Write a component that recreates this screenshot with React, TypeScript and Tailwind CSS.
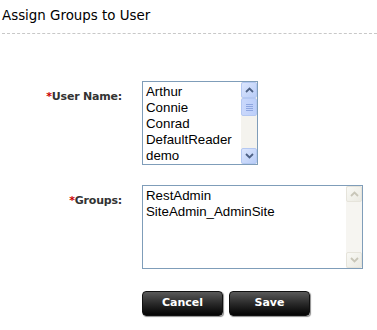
import React from "react";

const users = ["Arthur", "Connie", "Conrad", "DefaultReader", "demo"];
const groups = ["RestAdmin", "SiteAdmin_AdminSite"];

function Arrow({ up, color }: { up: boolean; color: string }) {
    return (
        <svg width="9" height="6" viewBox="0 0 9 6">
            <path
                d={up ? "M1 5 L4.5 1.5 L8 5" : "M1 1 L4.5 4.5 L8 1"}
                fill="none"
                stroke={color}
                strokeWidth="1.8"
            />
        </svg>
    );
}

function ScrollBar({ active }: { active: boolean }) {
    const btn = active
        ? "bg-gradient-to-br from-[#dce6fd] to-[#b9cdf7] border-[#b4c8f2]"
        : "bg-gradient-to-br from-[#f9f9f5] to-[#ebeae2] border-[#e6e4db]";
    const arrow = active ? "#4d6185" : "#c8c6b8";
    return (
        <div className={`flex w-[16px] flex-col ${active ? "bg-[#f4f3ee]" : "bg-[#f6f5f1]"}`}>
            <div className={`flex h-[16px] items-center justify-center rounded-[2px] border ${btn}`}>
                <Arrow up color={arrow} />
            </div>
            {active && (
                <div className="flex h-[18px] flex-col items-center justify-center gap-[1px] rounded-[2px] border border-[#b4c8f2] bg-gradient-to-r from-[#cad8fb] to-[#bccffa]">
                    <div className="h-[1px] w-[7px] bg-[#8ea6e0]" />
                    <div className="h-[1px] w-[7px] bg-[#8ea6e0]" />
                    <div className="h-[1px] w-[7px] bg-[#8ea6e0]" />
                    <div className="h-[1px] w-[7px] bg-[#8ea6e0]" />
                </div>
            )}
            <div className="flex-1" />
            <div className={`flex h-[16px] items-center justify-center rounded-[2px] border ${btn}`}>
                <Arrow up={false} color={arrow} />
            </div>
        </div>
    );
}

function ListBox({ items, width, active }: { items: string[]; width: string; active: boolean }) {
    return (
        <div className={`flex h-[84px] ${width} border border-[#7f9db9] bg-white`}>
            <div className="flex-1 overflow-hidden pl-[3px] pt-[2px] font-['Liberation_Sans',Arial,sans-serif] text-[13.3px] leading-[16px] text-black">
                {items.map((it) => (
                    <div key={it} className="whitespace-nowrap">
                        {it}
                    </div>
                ))}
            </div>
            <ScrollBar active={active} />
        </div>
    );
}

function Label({ text }: { text: string }) {
    return (
        <div className="w-[122px] shrink-0 pt-[8px] text-right font-['DejaVu_Sans',Verdana,sans-serif] text-[11px] font-bold tracking-[-0.2px] text-[#333333]">
            <span className="text-[#cc0000]">*</span>
            {text}
        </div>
    );
}

function DarkButton({ label }: { label: string }) {
    return (
        <button className="h-[25px] w-[81px] rounded-[4px] border border-[#111] bg-gradient-to-b from-[#5a5a5a] via-[#2a2a2a] to-[#050505] font-['DejaVu_Sans',Verdana,sans-serif] text-[11px] font-bold text-white shadow-[1px_1px_1px_rgba(0,0,0,0.45)]">
            {label}
        </button>
    );
}

export default function App() {
    return (
        <div className="h-[330px] w-[377px] bg-white">
            <div className="px-[2px] pt-[7px] font-['DejaVu_Sans',Verdana,sans-serif] text-[13.4px] leading-[18px] text-black">
                Assign Groups to User
            </div>
            <div className="mt-[8px] ml-[2px] border-t border-dashed border-[#c8c8c8]" />
            <div className="mt-[47px] flex flex-col gap-[20px]">
                <div className="flex gap-[20px]">
                    <Label text="User Name:" />
                    <ListBox items={users} width="w-[116px]" active />
                </div>
                <div className="flex gap-[20px]">
                    <Label text="Groups:" />
                    <ListBox items={groups} width="w-[221px]" active={false} />
                </div>
                <div className="ml-[142px] mt-[2px] flex gap-[6px]">
                    <DarkButton label="Cancel" />
                    <DarkButton label="Save" />
                </div>
            </div>
        </div>
    );
}
